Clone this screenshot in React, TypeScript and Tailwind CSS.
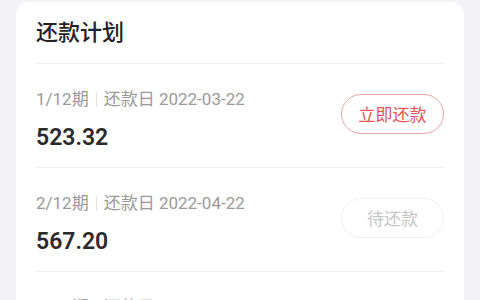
import React from 'react'

type Plan = { term: string; date: string; amount: string; current: boolean }

const PLANS: Plan[] = [
  { term: '1/12期', date: '2022-03-22', amount: '523.32', current: true },
  { term: '2/12期', date: '2022-04-22', amount: '567.20', current: false },
  { term: '3/12期', date: '2022-05-22', amount: '567.20', current: false },
]

const FONT = { fontFamily: 'Roboto, "Noto Sans CJK SC", sans-serif' }
const CJK = { fontFamily: '"Noto Sans CJK SC", sans-serif' }

function PlanRow({ plan }: { plan: Plan }): React.ReactElement {
  return (
    <div className="flex items-center justify-between border-b border-[#f1f1f3]">
      <div className="pt-[25px] pb-[15px]">
        <div className="flex items-center text-[17px] leading-[20px] text-[#9a9a9a]">
          <span>{plan.term}</span>
          <span className="mx-[7px] h-[15px] w-px bg-[#e2e2e2]" />
          <span>还款日 {plan.date}</span>
        </div>
        <div className="mt-[15px] text-[23px] leading-[28px] font-semibold text-[#2b2b2b]">
          {plan.amount}
        </div>
      </div>
      <button
        className={`mt-[-3px] h-[40px] w-[103px] rounded-full border text-[17px] ${
          plan.current
            ? 'border-[#eba6a6] text-[#e05757]'
            : 'border-[#efefef] text-[#c6c6c6]'
        }`}
        style={CJK}
      >
        {plan.current ? '立即还款' : '待还款'}
      </button>
    </div>
  )
}

export default function App(): React.ReactElement {
  return (
    <div className="h-[300px] w-[480px] overflow-hidden bg-[#f4f4f8] px-[16px] pt-[2px]" style={FONT}>
      <div className="rounded-[12px] bg-white px-[20px]">
        {/* Header */}
        <div
          className="border-b border-[#f1f1f3] pt-[15px] pb-[20px] text-[22px] leading-[26px] font-medium text-[#222]"
          style={CJK}
        >
          还款计划
        </div>

        {/* Plan list */}
        {PLANS.map(p => (
          <PlanRow key={p.term} plan={p} />
        ))}
      </div>
    </div>
  )
}
